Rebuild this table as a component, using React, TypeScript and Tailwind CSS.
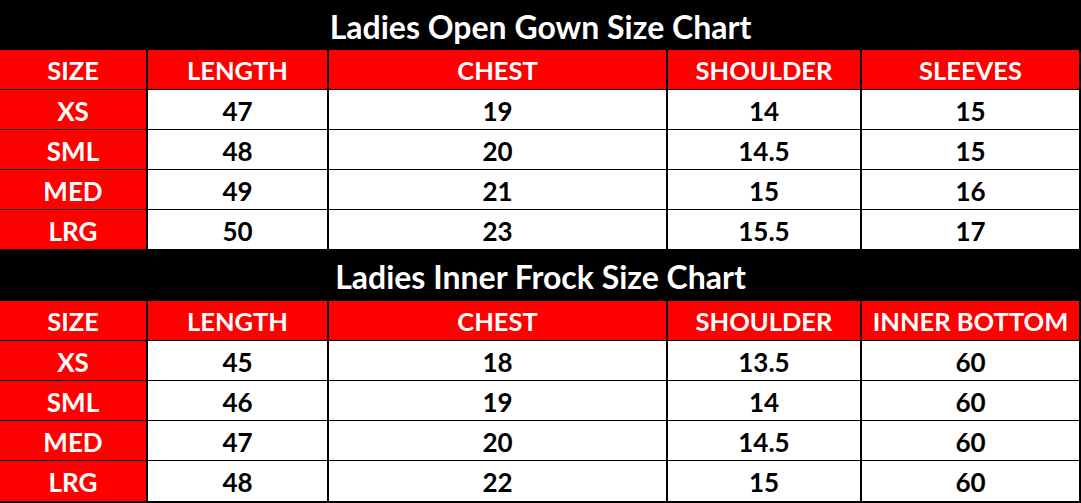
const font = { fontFamily: '"Lato", "Open Sans", sans-serif' };

const COLS = "grid-cols-[148px_181px_339px_194px_219px]";

interface ChartProps {
  title: string;
  headers: string[];
  rows: string[][];
  last?: boolean;
}

function Chart({ title, headers, rows, last = false }: ChartProps) {
  return (
    <div className="w-[1081px]">
      <div
        className={`bg-black flex items-center justify-center text-white font-bold text-[32px] pt-[3px] ${
          last ? "h-[51px]" : "h-[50px]"
        }`}
      >
        {title}
      </div>
      <div className={`grid ${COLS}`}>
        {headers.map((h) => (
          <div
            key={h}
            className="h-[40px] pt-[2px] bg-[#ff0000] text-white font-bold text-[25.5px] flex items-center justify-center border-b border-r-2 border-black"
          >
            {h}
          </div>
        ))}
        {rows.map((r, ri) =>
          r.map((c, ci) => (
            <div
              key={`${ri}-${ci}`}
              className={`flex items-center justify-center pt-[3px] font-bold text-[26px] border-r-2 border-black ${
                ci === 0 ? "bg-[#ff0000] text-white" : "bg-white text-black"
              } ${last && ri === rows.length - 1 ? "border-b-2 h-[42px]" : "border-b h-[40px]"}`}
            >
              {c}
            </div>
          ))
        )}
      </div>
    </div>
  );
}

export default function App() {
  return (
    <div className="w-[1081px] h-[503px] bg-white overflow-hidden" style={font}>
      <Chart
        title="Ladies Open Gown Size Chart"
        headers={["SIZE", "LENGTH", "CHEST", "SHOULDER", "SLEEVES"]}
        rows={[
          ["XS", "47", "19", "14", "15"],
          ["SML", "48", "20", "14.5", "15"],
          ["MED", "49", "21", "15", "16"],
          ["LRG", "50", "23", "15.5", "17"],
        ]}
      />
      <Chart
        title="Ladies Inner Frock Size Chart"
        headers={["SIZE", "LENGTH", "CHEST", "SHOULDER", "INNER BOTTOM"]}
        rows={[
          ["XS", "45", "18", "13.5", "60"],
          ["SML", "46", "19", "14", "60"],
          ["MED", "47", "20", "14.5", "60"],
          ["LRG", "48", "22", "15", "60"],
        ]}
        last
      />
    </div>
  );
}
